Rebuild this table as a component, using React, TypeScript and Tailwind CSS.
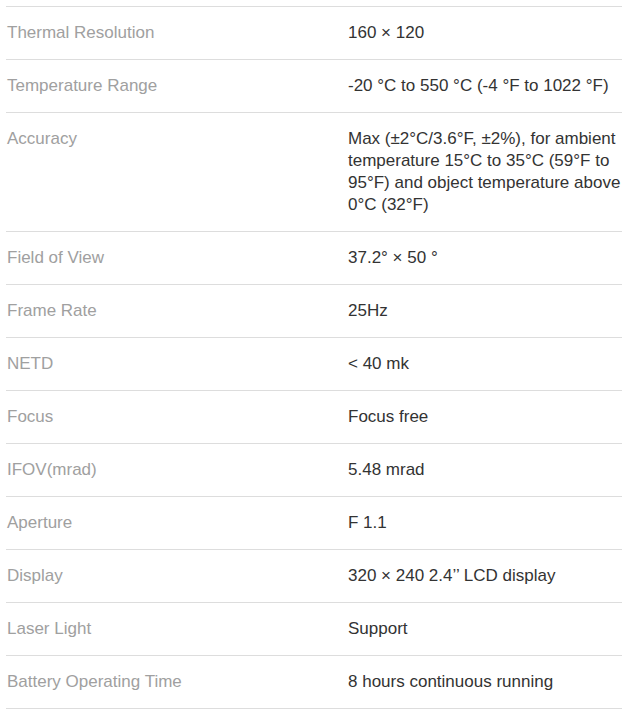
const specs: [string, string][] = [
  ['Thermal Resolution', '160 × 120'],
  ['Temperature Range', '-20 °C to 550 °C (-4 °F to 1022 °F)'],
  [
    'Accuracy',
    'Max (±2°C/3.6°F, ±2%), for ambient temperature 15°C to 35°C (59°F to 95°F) and object temperature above 0°C (32°F)',
  ],
  ['Field of View', '37.2° × 50 °'],
  ['Frame Rate', '25Hz'],
  ['NETD', '< 40 mk'],
  ['Focus', 'Focus free'],
  ['IFOV(mrad)', '5.48 mrad'],
  ['Aperture', 'F 1.1'],
  ['Display', '320 × 240 2.4’’ LCD display'],
  ['Laser Light', 'Support'],
  ['Battery Operating Time', '8 hours continuous running'],
]

export default function App() {
  return (
    <div className="min-h-[712px] bg-white pl-[6px] pt-[6px] font-['Liberation_Sans',Arial,sans-serif] text-[17px] leading-[22px]">
      <div className="border-b border-[#dddddd]">
        {specs.map(([label, value]) => (
          <div
            key={label}
            className="grid grid-cols-[342px_1fr] border-t border-[#dddddd] py-[15px]"
          >
            <div className="pl-px text-[#a0a0a0]">{label}</div>
            <div className="text-[#333333]">{value}</div>
          </div>
        ))}
      </div>
    </div>
  )
}
